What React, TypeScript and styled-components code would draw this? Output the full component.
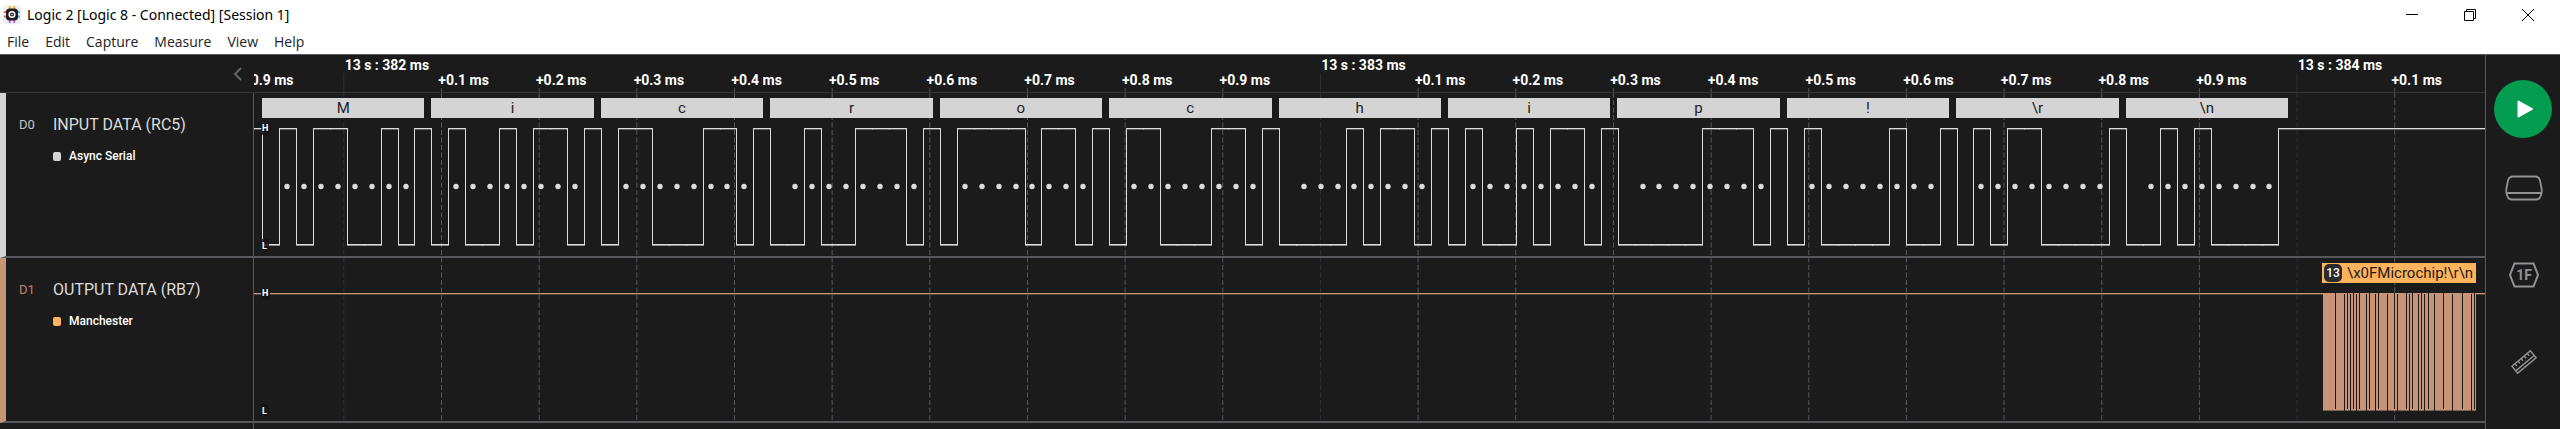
import React from "react";
import styled, { createGlobalStyle } from "styled-components";

const GlobalStyle = createGlobalStyle`
  * { box-sizing: border-box; }
  body {
    margin: 0;
    background: #1b1b1b;
    font-family: Roboto, "Liberation Sans", sans-serif;
  }
  button { font: inherit; border: 0; padding: 0; background: none; cursor: pointer; }
  svg { display: block; }
`;

/* ---------- time axis ---------- */

const FIRST_TICK = 89.85;
const TICK_STEP = 97.66;
const BIT = 16.944;
const FRAME = 169.45;
const SERIAL_START = 8;
const HIGH_Y = 10;
const LOW_Y = 126;

type Tick = { major?: string; minor?: string };

const ticks: Tick[] = [{ minor: "+0.9 ms" }];
for (let i = 0; i <= 21; i++) {
  ticks.push(
    i % 10 === 0
      ? { major: `13 s : ${382 + i / 10} ms` }
      : { minor: `+0.${i % 10} ms` }
  );
}

const message = [
  ["M", "M"], ["i", "i"], ["c", "c"], ["r", "r"], ["o", "o"], ["c", "c"],
  ["h", "h"], ["i", "i"], ["p", "p"], ["!", "!"], ["\\r", "\r"], ["\\n", "\n"],
];

/* ---------- shell ---------- */

const Window = styled.div`
  display: flex;
  flex-direction: column;
  min-height: 100vh;
  overflow: hidden;
`;

const TitleBar = styled.header`
  display: flex;
  align-items: center;
  height: 29px;
  padding: 0 3px 0 2px;
  background: #fff;
  color: #000;
  font-family: "Noto Sans", "Open Sans", sans-serif;
`;

const Title = styled.h1`
  flex: 1;
  margin: 0 0 0 5px;
  font-size: 14px;
  font-weight: 400;
  line-height: 20px;
`;

const CaptionButton = styled.button`
  display: flex;
  align-items: center;
  justify-content: center;
  width: 58px;
  height: 28px;
`;

const MenuBar = styled.nav`
  display: flex;
  gap: 16px;
  height: 25px;
  padding: 0 7px;
  background: #fff;
`;

const MenuItem = styled.button`
  color: #222;
  font-family: "Open Sans", "Noto Sans", sans-serif;
  font-size: 14px;
  line-height: 24px;
`;

const Workspace = styled.main`
  display: flex;
  flex: 1;
  border-top: 1px solid #57575c;
`;

const Analyzer = styled.div`
  display: grid;
  flex: 1;
  min-width: 0;
  grid-template-columns: 254px minmax(0, 1fr);
  grid-template-rows: auto auto auto 1fr;
`;

const RulerHead = styled.div`
  grid-area: 1 / 1;
  display: flex;
  align-items: center;
  justify-content: flex-end;
  padding-right: 12px;
  border-bottom: 1px solid #343438;
`;

const Ruler = styled.ol`
  grid-area: 1 / 2;
  display: flex;
  margin: 0;
  padding: 0;
  height: 38px;
  overflow: hidden;
  list-style: none;
  border-bottom: 1px solid #343438;
`;

const TickLabel = styled.li<{ $major: boolean }>`
  flex: none;
  display: flex;
  align-items: ${(p) => (p.$major ? "flex-start" : "flex-end")};
  padding: ${(p) => (p.$major ? "3px 0 0 4px" : "0 0 4px 0")};
  color: #fff;
  font-size: 14px;
  font-weight: 700;
  line-height: 15px;
  white-space: nowrap;
`;

const GridLines = styled.svg`
  grid-area: 1 / 2 / 4 / 3;
  width: 100%;
  height: 100%;
  pointer-events: none;
`;

/* ---------- channels ---------- */

const ChannelLabel = styled.section<{ $row: number; $color: string }>`
  grid-area: ${(p) => p.$row} / 1;
  display: grid;
  grid-template-columns: 34px 1fr;
  align-content: start;
  row-gap: 13px;
  padding: 22px 0 0 13px;
  border-left: 6px solid ${(p) => p.$color};
  border-right: 1px solid #57575c;
  border-bottom: 2px solid #57575c;
`;

const ChannelId = styled.span<{ $color: string }>`
  color: ${(p) => p.$color};
  font-size: 13px;
  line-height: 20px;
`;

const ChannelName = styled.h2`
  margin: 0;
  color: #dcdcdc;
  font-size: 16px;
  font-weight: 400;
  line-height: 20px;
`;

const AnalyzerName = styled.div<{ $color: string }>`
  grid-column: 2;
  display: flex;
  align-items: center;
  gap: 8px;
  color: #fff;
  font-size: 12px;
  font-weight: 500;
  line-height: 16px;

  &::before {
    content: "";
    width: 8px;
    height: 9px;
    border-radius: 2px;
    background: ${(p) => p.$color};
  }
`;

const Lane = styled.section<{ $row: number }>`
  grid-area: ${(p) => p.$row} / 2;
  padding-top: 5px;
  overflow: hidden;
  border-bottom: 2px solid #57575c;
`;

const FrameRow = styled.div`
  display: grid;
  grid-template-columns: repeat(12, 1fr);
  column-gap: 7px;
  width: 2034px;
  padding-left: 8px;
`;

const FrameBubble = styled.div`
  height: 20px;
  background: #d4d4d4;
  color: #222;
  font-size: 15px;
  line-height: 20px;
  text-align: center;
`;

const PacketRow = styled.div`
  display: flex;
  padding-left: 2068px;
`;

const PacketBubble = styled.div`
  flex: none;
  display: flex;
  align-items: center;
  gap: 5px;
  width: 154px;
  height: 20px;
  padding-left: 2px;
  background: #ffb35c;
  color: #1b1b1b;
  font-size: 15px;
  line-height: 20px;
  white-space: nowrap;
`;

const PacketCount = styled.span`
  flex: none;
  width: 18px;
  height: 18px;
  border-radius: 5px;
  background: #2b2b2e;
  color: #fff;
  font-size: 12px;
  font-weight: 500;
  line-height: 19px;
  text-align: center;
`;

const Waveform = styled.svg`
  width: 100%;
  height: 138px;
`;

const LevelText = styled.text`
  fill: #fff;
  font-size: 9px;
  font-weight: 700;
`;

const Footer = styled.div`
  grid-area: 4 / 1;
  border-right: 1px solid #57575c;
`;

/* ---------- sidebar ---------- */

const Sidebar = styled.aside`
  display: flex;
  flex: none;
  flex-direction: column;
  align-items: center;
  width: 75px;
  padding-top: 25px;
  border-left: 1px solid #57575c;
`;

const PlayButton = styled.button`
  display: flex;
  align-items: center;
  justify-content: center;
  width: 58px;
  height: 58px;
  margin-bottom: 6px;
  border-radius: 50%;
  background: #039b4f;
`;

const ToolButton = styled.button`
  display: flex;
  align-items: center;
  justify-content: center;
  width: 74px;
  height: 87px;
  padding-left: 2px;
`;

/* ---------- drawings ---------- */

const AppLogo = () => (
  <svg width="20" height="20" viewBox="0 0 20 20" aria-hidden="true">
    <rect x="0.5" y="0.5" width="19" height="19" rx="4" fill="#f1eff4" />
    <g strokeWidth="2">
      <path d="M7.8 1v4M12.2 1v4" stroke="#f5b62a" />
      <path d="M7.8 14v4M12.2 14v4" stroke="#b26bf0" />
      <path d="M2 7h4M2 11.500h4" stroke="#f0604c" />
      <path d="M14 7h4M14 11.500h4" stroke="#35b4ee" />
    </g>
    <rect x="4" y="3.500" width="12" height="12" rx="3.500" fill="#1d1d1f" />
    <circle cx="10" cy="9.500" r="2.800" fill="none" stroke="#fff" strokeWidth="1.500" />
    <circle cx="10" cy="9.500" r="0.800" fill="#fff" />
  </svg>
);

const GridOverlay = () => (
  <GridLines aria-hidden="true">
    {Array.from({ length: 22 }, (_, i) => {
      const x = FIRST_TICK + TICK_STEP * i;
      const major = i % 10 === 0;
      return (
        <g key={i} stroke={major ? "#303034" : "#57575b"} strokeWidth="1">
          <line x1={x} x2={x} y1={major ? 18 : 33} y2="43" />
          <line x1={x} x2={x} y1="45" y2="366" strokeDasharray="5 2.500" />
        </g>
      );
    })}
  </GridLines>
);

const Levels = () => (
  <g>
    <rect x="7" y="5" width="9" height="12" rx="2" fill="#141414" opacity="0.85" />
    <LevelText x="8" y="13">H</LevelText>
    <rect x="7" y="121" width="8" height="12" rx="2" fill="#141414" opacity="0.85" />
    <LevelText x="8" y="131">L</LevelText>
  </g>
);

const serialBits = message.flatMap(([, char], frame) => {
  const code = char.charCodeAt(0);
  const bits = [0, ...Array.from({ length: 8 }, (_, b) => (code >> b) & 1)];
  if (frame < message.length - 1) bits.push(1);
  return bits.map((level, b) => ({
    level,
    x: Math.round(SERIAL_START + frame * FRAME + b * BIT),
  }));
});

const serialEnd = Math.round(SERIAL_START + 11 * FRAME + 9 * BIT);

const SerialWave = () => (
  <Waveform aria-label="Async serial waveform">
    <g fill="#dcdcdc">
      <rect x="0" y={HIGH_Y} width={SERIAL_START} height="1.350" />
      {serialBits.map(({ level, x }, i) => {
        const end = i + 1 < serialBits.length ? serialBits[i + 1].x : serialEnd;
        const previous = i === 0 ? 1 : serialBits[i - 1].level;
        return (
          <g key={i}>
            <rect
              x={x}
              y={level ? HIGH_Y : LOW_Y}
              width={end - x + 1}
              height={level ? 1.35 : 1.6}
            />
            {previous !== level && (
              <rect x={x} y={HIGH_Y} width="1" height={LOW_Y - HIGH_Y + 1} />
            )}
          </g>
        );
      })}
      <rect x={serialEnd} y={HIGH_Y} width="1" height={LOW_Y - HIGH_Y + 1} />
      <rect x={serialEnd} y={HIGH_Y} width="100%" height="1.350" />
      {message.map((_, frame) =>
        Array.from({ length: 8 }, (_, b) => (
          <circle
            key={`${frame}-${b}`}
            cx={Math.round(SERIAL_START + frame * FRAME + (b + 1.5) * BIT - 0.5)}
            cy="68.500"
            r="2.700"
          />
        ))
      )}
    </g>
    <Levels />
  </Waveform>
);

const burstGaps = [
  2081, 2090, 2093, 2096, 2099, 2102, 2105, 2112, 2115, 2121, 2124, 2133, 2140,
  2143, 2152, 2155, 2158, 2164, 2167, 2170, 2174, 2180, 2189, 2198, 2208, 2217,
  2220,
];

const ManchesterWave = () => (
  <Waveform aria-label="Manchester waveform">
    <rect x="0" y={HIGH_Y} width="100%" height="1.350" fill="#c79478" />
    <rect x="2069" y={HIGH_Y} width="153" height="117" fill="#c79478" />
    <rect x="2069" y="127" width="153" height="1" fill="#7d604f" />
    <g fill="#1b1b1b">
      {burstGaps.map((x, i) => (
        <rect key={x} x={x} y={i % 2 ? 11 : 10} width="1" height={i % 2 ? 117 : 116} />
      ))}
    </g>
    <Levels />
  </Waveform>
);

const menus = ["File", "Edit", "Capture", "Measure", "View", "Help"];

export default function App() {
  return (
    <Window>
      <GlobalStyle />
      <TitleBar>
        <AppLogo />
        <Title>Logic 2 [Logic 8 - Connected] [Session 1]</Title>
        <CaptionButton aria-label="Minimize">
          <svg width="12" height="12">
            <path d="M0 5.500h12" stroke="#000" />
          </svg>
        </CaptionButton>
        <CaptionButton aria-label="Restore">
          <svg width="12" height="12" fill="none" stroke="#000">
            <path d="M0.500 2.500h9v9h-9zM2.500 2.500v-2h9v9h-2" />
          </svg>
        </CaptionButton>
        <CaptionButton aria-label="Close">
          <svg width="12" height="12" stroke="#000">
            <path d="M0 0l12 12M12 0L0 12" />
          </svg>
        </CaptionButton>
      </TitleBar>
      <MenuBar>
        {menus.map((name) => (
          <MenuItem key={name}>{name}</MenuItem>
        ))}
      </MenuBar>
      <Workspace>
        <Analyzer>
          <RulerHead>
            <button aria-label="Collapse channels">
              <svg width="9" height="14" fill="none" stroke="#66666a" strokeWidth="2">
                <path d="M8 1L2 7l6 6" />
              </svg>
            </button>
          </RulerHead>
          <GridOverlay />
          <Ruler>
            {ticks.map((tick, i) => (
              <TickLabel
                key={i}
                $major={Boolean(tick.major)}
                style={{ width: TICK_STEP, marginLeft: i === 0 ? -11 : 0 }}
              >
                {tick.major ?? tick.minor}
              </TickLabel>
            ))}
          </Ruler>

          <ChannelLabel $row={2} $color="#d4d4d4">
            <ChannelId $color="#c4c4c4">D0</ChannelId>
            <ChannelName>INPUT DATA (RC5)</ChannelName>
            <AnalyzerName $color="#d4d4d4">Async Serial</AnalyzerName>
          </ChannelLabel>
          <Lane $row={2}>
            <FrameRow>
              {message.map(([label], i) => (
                <FrameBubble key={i}>{label}</FrameBubble>
              ))}
            </FrameRow>
            <SerialWave />
          </Lane>

          <ChannelLabel $row={3} $color="#c79478">
            <ChannelId $color="#c4805f">D1</ChannelId>
            <ChannelName>OUTPUT DATA (RB7)</ChannelName>
            <AnalyzerName $color="#ffb35c">Manchester</AnalyzerName>
          </ChannelLabel>
          <Lane $row={3}>
            <PacketRow>
              <PacketBubble>
                <PacketCount>13</PacketCount>
                {"\\x0FMicrochip!\\r\\n"}
              </PacketBubble>
            </PacketRow>
            <ManchesterWave />
          </Lane>
          <Footer />
        </Analyzer>

        <Sidebar>
          <PlayButton aria-label="Start capture">
            <svg width="20" height="20" viewBox="0 0 20 20">
              <path d="M5.500 2.500v15L19 10z" fill="#fff" stroke="#fff" strokeWidth="2" strokeLinejoin="round" />
            </svg>
          </PlayButton>
          <ToolButton aria-label="Device settings">
            <svg width="38" height="26" fill="none" stroke="#929292" strokeWidth="1.800">
              <path d="M8 1.500h22q4 0 5 4l1.500 8q0.500 3 0 5l-1 3q-1 3-4.500 3H7q-3.500 0-4.500-3l-1-3q-0.500-2 0-5l1.500-8q1-4 5-4z" />
              <path d="M1.500 18h35" />
            </svg>
          </ToolButton>
          <ToolButton aria-label="Analyzers">
            <svg width="30" height="26" viewBox="0 0 30 26">
              <path d="M5.500 1.500h19L29 13l-4.500 11.500h-19L1 13z" fill="none" stroke="#929292" strokeWidth="2" />
              <text x="15" y="18" fill="#929292" fontSize="14" fontWeight="700" textAnchor="middle">1F</text>
            </svg>
          </ToolButton>
          <ToolButton aria-label="Measurements">
            <svg width="26" height="26" viewBox="0 0 26 26" fill="none" stroke="#929292" strokeWidth="1.400">
              <g transform="translate(13 13) rotate(-40)">
                <path d="M-12 -4.500h24v9h-24zM-12 1.500h24" />
                <path d="M-8 -4.500v3M-4 -4.500v3M0 -4.500v3M4 -4.500v3M8 -4.500v3" />
              </g>
            </svg>
          </ToolButton>
        </Sidebar>
      </Workspace>
    </Window>
  );
}
